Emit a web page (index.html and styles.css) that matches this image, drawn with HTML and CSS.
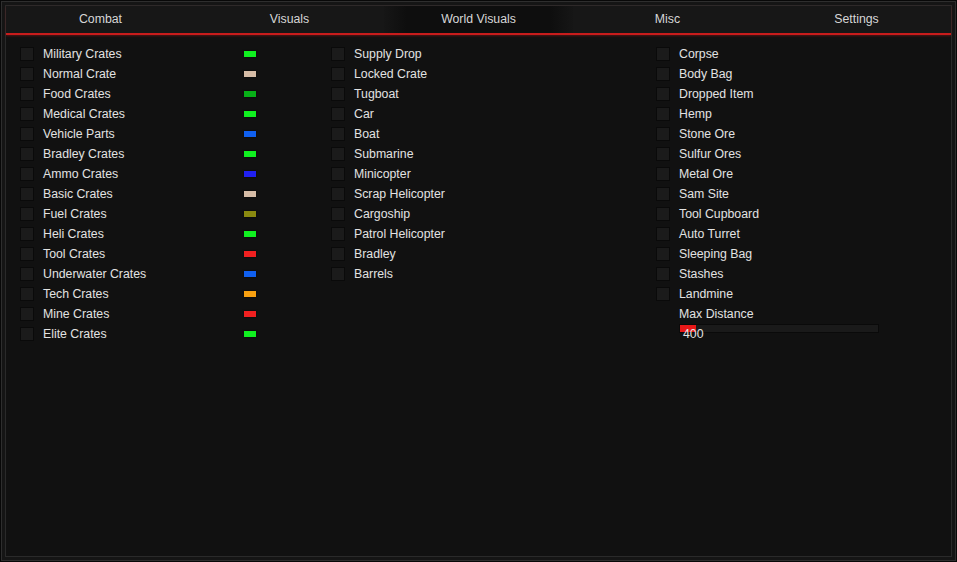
FILE: index.html
```html
<!DOCTYPE html>
<html lang="en">
<head>
    <meta charset="UTF-8">
    <title>World Visuals</title>
    <link rel="stylesheet" href="styles.css">
</head>
<body>
    <div class="frame">
        <div class="frame-inner">
            <div class="panel">
                <nav class="tabs">
                    <div class="tab">Combat</div>
                    <div class="tab">Visuals</div>
                    <div class="tab active">World Visuals</div>
                    <div class="tab">Misc</div>
                    <div class="tab">Settings</div>
                </nav>

                <div class="content">
                    <div class="column colors">
                        <div class="row"><span class="check"></span><span class="label">Military Crates</span><span class="swatch green"></span></div>
                        <div class="row"><span class="check"></span><span class="label">Normal Crate</span><span class="swatch tan"></span></div>
                        <div class="row"><span class="check"></span><span class="label">Food Crates</span><span class="swatch dark-green"></span></div>
                        <div class="row"><span class="check"></span><span class="label">Medical Crates</span><span class="swatch green"></span></div>
                        <div class="row"><span class="check"></span><span class="label">Vehicle Parts</span><span class="swatch blue"></span></div>
                        <div class="row"><span class="check"></span><span class="label">Bradley Crates</span><span class="swatch green"></span></div>
                        <div class="row"><span class="check"></span><span class="label">Ammo Crates</span><span class="swatch indigo"></span></div>
                        <div class="row"><span class="check"></span><span class="label">Basic Crates</span><span class="swatch tan"></span></div>
                        <div class="row"><span class="check"></span><span class="label">Fuel Crates</span><span class="swatch olive"></span></div>
                        <div class="row"><span class="check"></span><span class="label">Heli Crates</span><span class="swatch green"></span></div>
                        <div class="row"><span class="check"></span><span class="label">Tool Crates</span><span class="swatch red"></span></div>
                        <div class="row"><span class="check"></span><span class="label">Underwater Crates</span><span class="swatch blue"></span></div>
                        <div class="row"><span class="check"></span><span class="label">Tech Crates</span><span class="swatch orange"></span></div>
                        <div class="row"><span class="check"></span><span class="label">Mine Crates</span><span class="swatch red"></span></div>
                        <div class="row"><span class="check"></span><span class="label">Elite Crates</span><span class="swatch green"></span></div>
                    </div>

                    <div class="column">
                        <div class="row"><span class="check"></span><span class="label">Supply Drop</span></div>
                        <div class="row"><span class="check"></span><span class="label">Locked Crate</span></div>
                        <div class="row"><span class="check"></span><span class="label">Tugboat</span></div>
                        <div class="row"><span class="check"></span><span class="label">Car</span></div>
                        <div class="row"><span class="check"></span><span class="label">Boat</span></div>
                        <div class="row"><span class="check"></span><span class="label">Submarine</span></div>
                        <div class="row"><span class="check"></span><span class="label">Minicopter</span></div>
                        <div class="row"><span class="check"></span><span class="label">Scrap Helicopter</span></div>
                        <div class="row"><span class="check"></span><span class="label">Cargoship</span></div>
                        <div class="row"><span class="check"></span><span class="label">Patrol Helicopter</span></div>
                        <div class="row"><span class="check"></span><span class="label">Bradley</span></div>
                        <div class="row"><span class="check"></span><span class="label">Barrels</span></div>
                    </div>

                    <div class="column">
                        <div class="row"><span class="check"></span><span class="label">Corpse</span></div>
                        <div class="row"><span class="check"></span><span class="label">Body Bag</span></div>
                        <div class="row"><span class="check"></span><span class="label">Dropped Item</span></div>
                        <div class="row"><span class="check"></span><span class="label">Hemp</span></div>
                        <div class="row"><span class="check"></span><span class="label">Stone Ore</span></div>
                        <div class="row"><span class="check"></span><span class="label">Sulfur Ores</span></div>
                        <div class="row"><span class="check"></span><span class="label">Metal Ore</span></div>
                        <div class="row"><span class="check"></span><span class="label">Sam Site</span></div>
                        <div class="row"><span class="check"></span><span class="label">Tool Cupboard</span></div>
                        <div class="row"><span class="check"></span><span class="label">Auto Turret</span></div>
                        <div class="row"><span class="check"></span><span class="label">Sleeping Bag</span></div>
                        <div class="row"><span class="check"></span><span class="label">Stashes</span></div>
                        <div class="row"><span class="check"></span><span class="label">Landmine</span></div>

                        <div class="slider-group">
                            <div class="slider-label">Max Distance</div>
                            <div class="slider-track"><div class="slider-fill" style="width: 16px;"></div></div>
                            <div class="slider-value">400</div>
                        </div>
                    </div>
                </div>
            </div>
        </div>
    </div>
</body>
</html>
```

FILE: styles.css
```css
html, body { margin: 0; height: 100%; }
body { font-family: "Liberation Sans", Arial, sans-serif; font-size: 12.3px; color: #e2e2e2; background-color: #090909; }

.frame { height: 100%; box-sizing: border-box; border: 1px solid #080808; }
.frame-inner { height: 100%; box-sizing: border-box; border: 1px solid #2e2e2e; padding: 3px; background-color: #151515; }
.panel { height: 100%; box-sizing: border-box; border: 1px solid #2a2a2a; background-color: #111111; display: flex; flex-direction: column; }

.tabs { display: flex; height: 27px; background-color: #171717; border-bottom: 2px solid #c81c1c; box-shadow: 0 1px 2px rgba(200, 28, 28, 0.35); }
.tab { flex: 1; display: flex; align-items: center; justify-content: center; padding-bottom: 2px; color: #d6d6d6; }
.tab.active { background: linear-gradient(to right, #161616, #0e0e0e 12%, #0e0e0e 88%, #161616); }

.content { display: grid; grid-template-columns: 311px 325px 1fr; padding: 9px 0 0 14px; }
.column { display: flex; flex-direction: column; }

.row { display: flex; align-items: center; height: 20px; }
.check { width: 12px; height: 12px; background-color: #1b1b1b; border: 1px solid #0a0a0a; margin-right: 9px; flex-shrink: 0; }
.label { white-space: nowrap; }

.colors .row { width: 236px; }
.swatch { margin-left: auto; width: 12px; height: 6px; box-shadow: 0 0 2px rgba(0, 0, 0, 0.8); }
.green { background-color: #10f020; }
.tan { background-color: #d6bca6; }
.dark-green { background-color: #08b018; }
.blue { background-color: #1060f0; }
.indigo { background-color: #2020f0; }
.olive { background-color: #8a8a10; }
.red { background-color: #f02020; }
.orange { background-color: #f8a010; }

.slider-group { padding-left: 23px; }
.slider-label { height: 20px; line-height: 20px; }
.slider-track { width: 198px; height: 7px; background-color: #1a1a1a; border: 1px solid #0a0a0a; }
.slider-fill { height: 100%; background-color: #e81818; }
.slider-value { margin-top: -6px; padding-left: 4px; line-height: 14px; }
```
